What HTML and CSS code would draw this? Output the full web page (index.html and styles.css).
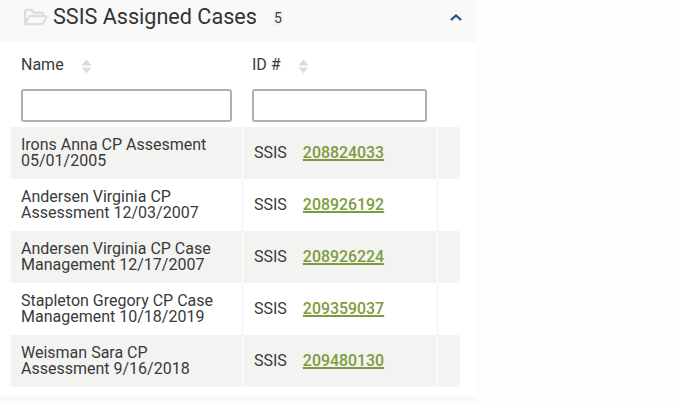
FILE: index.html
```html
<!DOCTYPE html>
<html lang="en">
<head>
<meta charset="utf-8">
<title>SSIS Assigned Cases</title>
<link rel="stylesheet" href="styles.css">
</head>
<body>
<section class="panel">
  <header class="panel-head">
    <svg class="folder" viewBox="0 0 26 20" aria-hidden="true"><path d="M2 17V3.500C2 2.700 2.700 2 3.500 2H9l2.500 3H19.500C20.300 5 21 5.700 21 6.500V8.500M2 17L6 9.500C6.300 8.900 6.800 8.500 7.500 8.500H23.500C24.300 8.500 24.700 9.300 24.300 10L21 16C20.600 16.700 20 17 19.300 17Z"/></svg>
    <h2 class="title">SSIS Assigned Cases</h2>
    <span class="count">5</span>
    <svg class="chevron" viewBox="0 0 14 9" aria-hidden="true"><path d="M2 7L7 2.500L12 7"/></svg>
  </header>
  <div class="panel-body">
    <div class="filters">
      <div class="filter filter-name">
        <div class="label">Name <svg class="sort" viewBox="0 0 11 15" aria-hidden="true"><path class="up" d="M5.500 0.500L10.500 6.500H0.500Z"/><path class="down" d="M0.500 8.500H10.500L5.500 14.500Z"/></svg></div>
        <input class="box" type="text" aria-label="Name">
      </div>
      <div class="filter filter-id">
        <div class="label">ID # <svg class="sort" viewBox="0 0 11 15" aria-hidden="true"><path class="up" d="M5.500 0.500L10.500 6.500H0.500Z"/><path class="down" d="M0.500 8.500H10.500L5.500 14.500Z"/></svg></div>
        <input class="box" type="text" aria-label="ID">
      </div>
    </div>
    <div class="rows">
      <div class="row shaded"><div class="cell name">Irons Anna CP Assesment<br>05/01/2005</div><div class="cell id"><span>SSIS</span><a href="#">208824033</a></div><div class="cell"></div></div>
      <div class="row"><div class="cell name">Andersen Virginia CP<br>Assessment 12/03/2007</div><div class="cell id"><span>SSIS</span><a href="#">208926192</a></div><div class="cell"></div></div>
      <div class="row shaded"><div class="cell name">Andersen Virginia CP Case<br>Management 12/17/2007</div><div class="cell id"><span>SSIS</span><a href="#">208926224</a></div><div class="cell"></div></div>
      <div class="row"><div class="cell name">Stapleton Gregory CP Case<br>Management 10/18/2019</div><div class="cell id"><span>SSIS</span><a href="#">209359037</a></div><div class="cell"></div></div>
      <div class="row shaded"><div class="cell name">Weisman Sara CP<br>Assessment 9/16/2018</div><div class="cell id"><span>SSIS</span><a href="#">209480130</a></div><div class="cell"></div></div>
    </div>
  </div>
</section>
</body>
</html>
```
FILE: styles.css
```css
html, body { margin: 0; padding: 0; }
body {
  width: 678px;
  height: 403px;
  overflow: hidden;
  background: #fdfdfd;
  font-family: Roboto, "Liberation Sans", sans-serif;
  color: #3a3a3a;
}
.panel {
  width: 476px;
  height: 403px;
  background: #f9f9f9;
}
.panel-head {
  height: 42px;
  box-sizing: border-box;
  display: flex;
  align-items: center;
  padding: 0 13px 8px 23px;
}
.folder {
  width: 25px;
  height: 19px;
  margin-right: 5px;
  fill: none;
  stroke: #e2d9e2;
  stroke-width: 2.400;
}
.title {
  margin: 0;
  font-size: 21.600px;
  font-weight: 400;
  line-height: 24px;
  color: #333;
}
.count {
  margin: 2px 0 0 16px;
  padding: 0 1px;
  font-size: 14px;
  line-height: 16px;
  background: #f3f3f3;
}
.chevron {
  width: 14px;
  height: 9px;
  margin-left: auto;
  fill: none;
  stroke: #17507f;
  stroke-width: 2.200;
}
.panel-body {
  background: #fff;
  padding-bottom: 9px;
}
.filters {
  display: flex;
  padding: 13px 0 5px 21px;
  gap: 20px;
}
.label {
  height: 20px;
  font-size: 16px;
  line-height: 20px;
  display: flex;
  align-items: center;
  margin-bottom: 14px;
}
.sort {
  width: 11px;
  height: 15px;
  margin-left: 17px;
  margin-top: 2px;
}
.sort .up { fill: #e2d8d8; }
.sort .down { fill: #e4dcd8; }
.filter-name { width: 211px; }
.filter-id { width: 175px; }
.box {
  display: block;
  width: 100%;
  height: 33px;
  box-sizing: border-box;
  border: 2px solid #b0b0b0;
  border-radius: 3px;
  background: #fff;
  padding: 0;
}
.rows {
  display: flex;
  flex-direction: column;
  margin-left: 11px;
  width: 449px;
}
.row {
  display: grid;
  grid-template-columns: 230px 192px 21px;
  column-gap: 3px;
  height: 52px;
  background: #f9f9f9;
}
.cell {
  display: flex;
  align-items: center;
  background: #fff;
  font-size: 16px;
  line-height: 16px;
  color: #3a3a3a;
}
.shaded .cell { background: #f3f3f1; }
.name { display: block; padding: 10px 0 0 10px; box-sizing: border-box; }
.id { padding-left: 10px; }
.id a {
  margin-left: 16px;
  font-weight: 500;
  font-size: 15.900px;
  color: #7d9c3c;
  text-decoration: underline;
  text-decoration-thickness: 1.500px;
}
```
